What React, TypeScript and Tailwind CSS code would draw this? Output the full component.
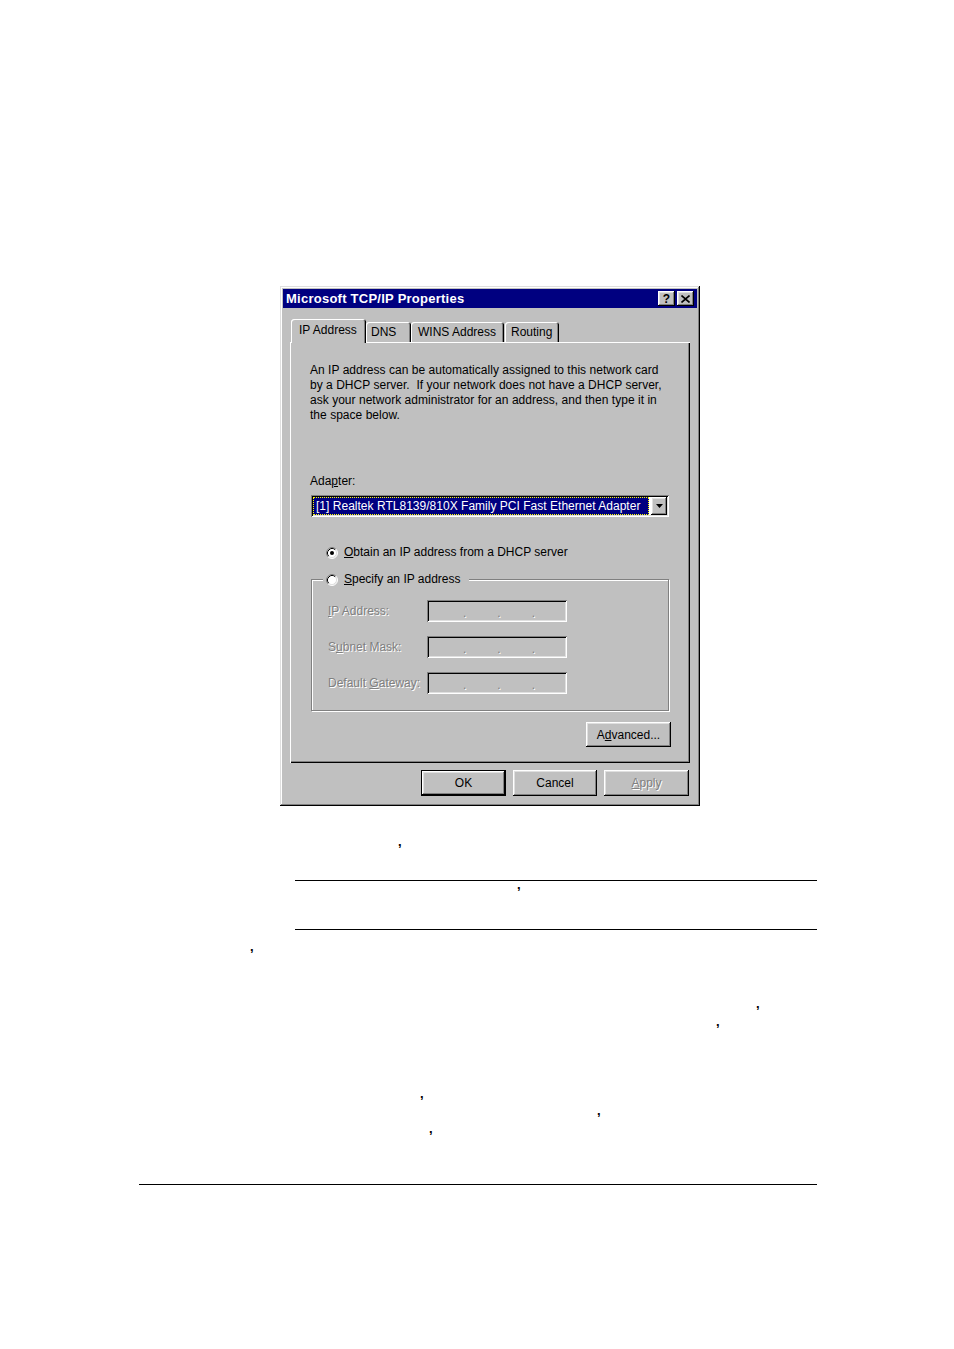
import React from "react";

const raised =
  "shadow-[inset_-1px_-1px_#000,inset_1px_1px_#fff,inset_-2px_-2px_#808080,inset_2px_2px_#dfdfdf]";
const sunken =
  "shadow-[inset_1px_1px_#808080,inset_-1px_-1px_#fff,inset_2px_2px_#000,inset_-2px_-2px_#dfdfdf]";
const disabledText = "text-[#808080] [text-shadow:1px_1px_0_#fff]";

function Radio({ checked }: { checked?: boolean }) {
  return (
    <svg width="12" height="12" viewBox="0 0 12 12" className="shrink-0">
      <circle cx="6" cy="6" r="5" fill="#fff" />
      <path d="M2.11 9.89 A5.5 5.5 0 0 1 9.89 2.11" stroke="#808080" fill="none" />
      <path d="M9.89 2.11 A5.5 5.5 0 0 1 2.11 9.89" stroke="#fff" fill="none" />
      <path d="M2.82 9.18 A4.5 4.5 0 0 1 9.18 2.82" stroke="#000" fill="none" />
      <path d="M9.18 2.82 A4.5 4.5 0 0 1 2.82 9.18" stroke="#dfdfdf" fill="none" />
      {checked && <circle cx="6" cy="6" r="2" fill="#000" />}
    </svg>
  );
}

function IpField() {
  return (
    <div className={`w-[140px] h-[22px] bg-[#c0c0c0] ${sunken} flex items-center pl-[36px] gap-[31px] text-[12px] leading-none pt-[4px] ${disabledText}`}>
      <span>.</span>
      <span>.</span>
      <span>.</span>
    </div>
  );
}

function Tab({ label, w, pl, selected }: { label: string; w: string; pl: string; selected?: boolean }) {
  return (
    <div
      className={`${w} ${pl} ${
        selected ? "h-[24px] -mb-px relative z-10 pt-[2px]" : "h-[20px] pt-[1px]"
      } bg-[#c0c0c0] rounded-t-[3px] shadow-[inset_1px_1px_#fff,inset_-1px_0_#000,inset_-2px_0_#808080] flex items-start justify-start text-[12px] leading-[18px] whitespace-nowrap`}
    >
      {label}
    </div>
  );
}

function Btn({
  children,
  w,
  def,
  disabled,
}: {
  children: React.ReactNode;
  w: string;
  def?: boolean;
  disabled?: boolean;
}) {
  return (
    <div
      className={`${w} h-[26px] bg-[#c0c0c0] flex items-center justify-center text-[12px] ${
        def ? "border border-black" : ""
      } ${disabled ? disabledText : "text-black"}`}
    >
      <div className={`w-full h-full flex items-center justify-center ${raised}`}>{children}</div>
    </div>
  );
}

function Comma({ ml, mt }: { ml: string; mt: string }) {
  return <div className={`${ml} ${mt} h-[4px] leading-[4px] text-[13px] font-bold text-black`}>,</div>;
}

export default function App() {
  return (
    <div className="w-[954px] min-h-[1349px] bg-white font-['Liberation_Sans',Arial,sans-serif] text-black flex flex-col items-start overflow-hidden">
      {/* Dialog */}
      <div
        className={`ml-[280px] mt-[286px] w-[420px] h-[520px] bg-[#c0c0c0] p-[3px] flex flex-col shadow-[inset_-1px_-1px_#000,inset_1px_1px_#dfdfdf,inset_-2px_-2px_#808080,inset_2px_2px_#fff]`}
      >
        {/* Title bar */}
        <div className="h-[19px] bg-[#000080] flex items-center justify-between pl-[3px] pr-[3px]">
          <span className="text-white font-bold text-[13px] tracking-[0.25px] leading-none">Microsoft TCP/IP Properties</span>
          <div className="flex gap-[2px]">
            <div className={`w-[17px] h-[15px] bg-[#c0c0c0] ${raised} flex items-center justify-center text-[12px] font-bold leading-none`}>?</div>
            <div className={`w-[17px] h-[15px] bg-[#c0c0c0] ${raised} flex items-center justify-center`}>
              <svg width="9" height="8" viewBox="0 0 9 8">
                <path d="M0.5 0.5 L8.5 7.5 M8.5 0.5 L0.5 7.5" stroke="#000" strokeWidth="1.6" />
              </svg>
            </div>
          </div>
        </div>

        {/* Tabs + panel */}
        <div className="mt-[11px] px-[7px] flex flex-col">
          <div className="flex items-end h-[23px] pl-[1px]">
            <Tab label="IP Address" w="w-[75px]" pl="pl-[8px]" selected />
            <Tab label="DNS" w="w-[45px]" pl="pl-[5px]" />
            <Tab label="WINS Address" w="w-[93px]" pl="pl-[7px]" />
            <div className="w-[1px]" />
            <Tab label="Routing" w="w-[54px]" pl="pl-[6px]" />
          </div>
          <div className="h-[421px] bg-[#c0c0c0] shadow-[inset_1px_1px_#fff,inset_-1px_-1px_#000,inset_-2px_-2px_#808080] pl-[20px] pr-[20px] flex flex-col text-[12px]">
            <p className="mt-[21px] leading-[15px] tracking-[0.03px] whitespace-nowrap">
              An IP address can be automatically assigned to this network card
              <br />
              by a DHCP server.&nbsp; If your network does not have a DHCP server,
              <br />
              ask your network administrator for an address, and then type it in
              <br />
              the space below.
            </p>

            <div className="mt-[51px] leading-[15px]">
              Ada<u>p</u>ter:
            </div>

            <div className={`mt-[6px] ml-[1px] w-[358px] h-[22px] bg-white ${sunken} p-[2px] flex items-center`}>
              <div className="flex-1 h-[18px] bg-[#000080] border border-dotted border-[#ffff00] text-white leading-[16px] pl-[2px] tracking-[0.02px] whitespace-nowrap overflow-hidden">
                [1] Realtek RTL8139/810X Family PCI Fast Ethernet Adapter
              </div>
              <div className="w-[2px]" />
              <div className={`w-[16px] h-[18px] bg-[#c0c0c0] ${raised} flex items-center justify-center`}>
                <svg width="7" height="4" viewBox="0 0 7 4">
                  <path d="M0 0 H7 L3.5 4 Z" fill="#000" />
                </svg>
              </div>
            </div>

            <div className="mt-[28px] h-[15px] ml-[16px] flex items-center gap-[6px] leading-[15px]">
              <Radio checked />
              <span>
                <u>O</u>btain an IP address from a DHCP server
              </span>
            </div>

            <fieldset className="mt-[12px] ml-[1px] w-[358px] h-[139px] border border-[#808080] shadow-[inset_1px_1px_#fff,1px_1px_#fff] p-0">
              <legend className="ml-[11px] pl-[3px] pr-[8px] bg-[#c0c0c0] leading-[15px]">
                <span className="flex items-center gap-[6px]">
                  <Radio />
                  <span>
                    <u>S</u>pecify an IP address
                  </span>
                </span>
              </legend>
              <div className="pl-[16px] pt-[13px] flex flex-col gap-[14px]">
                <div className="flex items-center h-[22px]">
                  <span className={`w-[99px] ${disabledText}`}>
                    <u>I</u>P Address:
                  </span>
                  <IpField />
                </div>
                <div className="flex items-center h-[22px]">
                  <span className={`w-[99px] ${disabledText}`}>
                    S<u>u</u>bnet Mask:
                  </span>
                  <IpField />
                </div>
                <div className="flex items-center h-[22px]">
                  <span className={`w-[99px] whitespace-nowrap ${disabledText}`}>
                    Default <u>G</u>ateway:
                  </span>
                  <IpField />
                </div>
              </div>
            </fieldset>

            <div className="mt-[11px] flex justify-end mr-[-1px]">
              <div className={`w-[85px] h-[25px] bg-[#c0c0c0] ${raised} flex items-center justify-center`}>
                A<u>d</u>vanced...
              </div>
            </div>
          </div>

          {/* Footer buttons */}
          <div className="mt-[7px] flex justify-end gap-[7px] pr-[1px]">
            <Btn w="w-[85px]" def>
              OK
            </Btn>
            <Btn w="w-[84px]">Cancel</Btn>
            <Btn w="w-[85px]" disabled>
              <span>
                <u>A</u>pply
              </span>
            </Btn>
          </div>
        </div>
      </div>

      {/* Page remnants */}
      <Comma ml="ml-[398px]" mt="mt-[34px]" />
      <div className="ml-[295px] mt-[36px] w-[522px] h-[50px] border-t border-b border-black pt-[2px]">
        <div className="ml-[222px] h-[4px] leading-[4px] text-[13px] font-bold">,</div>
      </div>
      <Comma ml="ml-[250px]" mt="mt-[15px]" />
      <Comma ml="ml-[756px]" mt="mt-[53px]" />
      <Comma ml="ml-[716px]" mt="mt-[14px]" />
      <Comma ml="ml-[420px]" mt="mt-[68px]" />
      <Comma ml="ml-[597px]" mt="mt-[13px]" />
      <Comma ml="ml-[429px]" mt="mt-[14px]" />
      <div className="ml-[139px] mt-[53px] w-[678px] h-px bg-black" />
    </div>
  );
}
